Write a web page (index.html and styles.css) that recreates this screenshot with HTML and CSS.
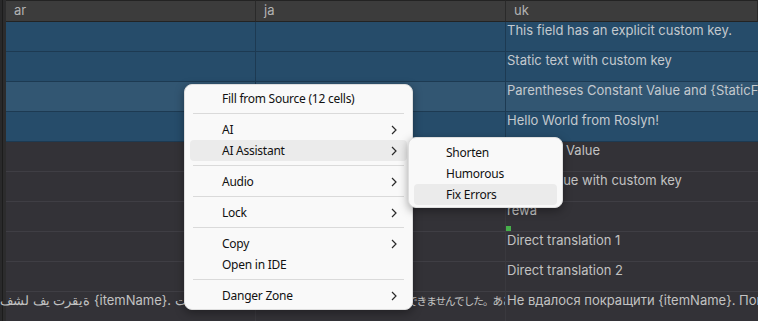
FILE: index.html
```html
<!DOCTYPE html>
<html>
<head>
<meta charset="utf-8">
<link rel="stylesheet" href="styles.css">
</head>
<body>
<div class="app">
  <div class="gutter"></div>
  <div class="table">
    <div class="hcell">ar</div>
    <div class="hcell">ja</div>
    <div class="hcell">uk</div>

    <div class="cell sel"></div><div class="cell sel"></div><div class="cell sel">This field has an explicit custom key.</div>
    <div class="cell sel"></div><div class="cell sel"></div><div class="cell sel">Static text with custom key</div>
    <div class="cell hov"></div><div class="cell hov"></div><div class="cell hov">Parentheses Constant Value and {StaticField} with custom key</div>
    <div class="cell sel"></div><div class="cell sel"></div><div class="cell sel">Hello World from Roslyn!</div>
    <div class="cell"></div><div class="cell"></div><div class="cell">Constant Value</div>
    <div class="cell"></div><div class="cell"></div><div class="cell">Static value with custom key</div>
    <div class="cell"></div><div class="cell"></div><div class="cell mark">rewa<span class="dot"></span></div>
    <div class="cell"></div><div class="cell"></div><div class="cell">Direct translation 1</div>
    <div class="cell"></div><div class="cell"></div><div class="cell">Direct translation 2</div>
    <div class="cell ar"><span class="artext">فشل في ترقية {itemName}. تحقق من الاتصال وحاول مرة أخرى.</span></div>
    <div class="cell">{itemName}<span class="cjk">をアップグレードできませんでした。あとでもう一度お試しください。</span></div>
    <div class="cell">Не вдалося покращити {itemName}. Повторіть спробу пізніше.</div>
  </div>
</div>

<div class="menu main">
  <div class="item">Fill from Source (12 cells)</div>
  <div class="sep"></div>
  <div class="item">AI<svg class="chev" viewBox="0 0 6 10"><polyline points="1,1 5,5 1,9"/></svg></div>
  <div class="item active">AI Assistant<svg class="chev" viewBox="0 0 6 10"><polyline points="1,1 5,5 1,9"/></svg></div>
  <div class="sep"></div>
  <div class="item">Audio<svg class="chev" viewBox="0 0 6 10"><polyline points="1,1 5,5 1,9"/></svg></div>
  <div class="sep"></div>
  <div class="item">Lock<svg class="chev" viewBox="0 0 6 10"><polyline points="1,1 5,5 1,9"/></svg></div>
  <div class="sep"></div>
  <div class="item">Copy<svg class="chev" viewBox="0 0 6 10"><polyline points="1,1 5,5 1,9"/></svg></div>
  <div class="item">Open in IDE</div>
  <div class="sep"></div>
  <div class="item">Danger Zone<svg class="chev" viewBox="0 0 6 10"><polyline points="1,1 5,5 1,9"/></svg></div>
</div>

<div class="menu sub">
  <div class="item">Shorten</div>
  <div class="item">Humorous</div>
  <div class="item active">Fix Errors</div>
</div>
</body>
</html>
```
FILE: styles.css
```css
html, body {
  margin: 0;
  padding: 0;
}
body {
  width: 758px;
  height: 321px;
  overflow: hidden;
  background: #333237;
  position: relative;
  font-family: Inter, "Noto Sans", sans-serif;
}
.app {
  display: flex;
  height: 321px;
}
.gutter {
  width: 6px;
  flex: none;
  background: linear-gradient(to right, #29292a 0, #29292a 2px, #1c1c1c 2px, #1c1c1c 3px, #2c2c2d 3px);
}
.table {
  flex: 1;
  display: grid;
  grid-template-columns: 250px 250px 1fr;
  grid-auto-rows: 30px;
  grid-template-rows: 22px;
  align-content: start;
  min-width: 0;
}
.hcell {
  background: #3c3c3c;
  border-top: 1px solid #232323;
  border-bottom: 1px solid #232323;
  border-right: 1px solid #2a2a2a;
  color: #b3b3b3;
  font-size: 13px;
  line-height: 19px;
  padding-left: 8px;
  box-sizing: border-box;
}
.hcell:last-child { border-right: none; }
.cell {
  box-sizing: border-box;
  border-bottom: 1px solid #3f3e44;
  border-right: 1px solid #3a393e;
  color: #c2c2c2;
  font-size: 13px;
  line-height: 16px;
  padding-left: 1px;
  white-space: nowrap;
  overflow: hidden;
  min-width: 0;
}
.cell:nth-child(3n) { border-right: none; }
.cell.sel {
  background: #264c6a;
  border-color: #1d3a52;
  color: #c4c9ce;
}
.cell.hov {
  background: #325672;
  border-bottom-color: #1d3a52;
  border-right-color: #1d3a52;
  color: #c4c9ce;
}
.mark { position: relative; }
.dot {
  position: absolute;
  left: 0;
  bottom: 0;
  width: 5px;
  height: 5px;
  background: #46b04a;
}
.cell.ar {
  margin-left: -6px;
  padding-left: 0;
}
.artext {
  direction: ltr;
  unicode-bidi: bidi-override;
}
.cjk {
  font-family: "Noto Sans CJK JP", sans-serif;
  font-size: 10.6px;
  letter-spacing: -1px;
}
.menu {
  position: absolute;
  background: #f9f9f9;
  border: 1px solid #dedede;
  border-radius: 8px;
  box-shadow: 0 3px 10px rgba(0, 0, 0, 0.35);
  font-family: "Noto Sans", sans-serif;
  font-size: 12px;
  letter-spacing: -0.25px;
  color: #111111;
  box-sizing: border-box;
}
.main {
  left: 184px;
  top: 84px;
  width: 229px;
  padding: 3px 5px;
}
.sub {
  left: 408px;
  top: 137px;
  width: 155px;
  padding: 4px 5px 2px;
}
.item {
  height: 21px;
  line-height: 21px;
  padding-left: 32px;
  padding-right: 10px;
  border-radius: 4px;
  display: flex;
  align-items: center;
  justify-content: space-between;
}
.item.active { background: #ebebeb; }
.sep {
  height: 1px;
  background: #dadada;
  margin: 4px 3px 5px;
}
.chev {
  width: 6px;
  height: 10px;
  fill: none;
  stroke: #2a2a2a;
  stroke-width: 1.2;
}
```
